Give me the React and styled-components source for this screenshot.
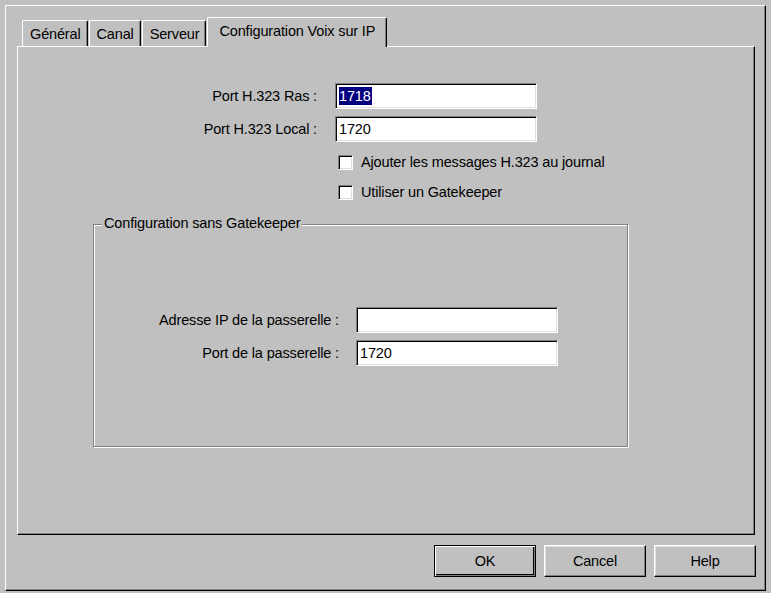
import styled, { createGlobalStyle } from 'styled-components';

// Win9x palette
const FACE = '#c0c0c0';
const LIGHT = '#dfdfdf';
const SHADOW = '#808080';
const DARK = '#000000';

const GlobalStyle = createGlobalStyle`
  html, body {
    margin: 0;
    padding: 0;
    background: ${FACE};
  }
  body {
    font-family: 'Liberation Sans', Arial, sans-serif;
    font-size: 14.5px;
    letter-spacing: -0.15px;
    color: #000;
  }
`;

const Window = styled.div`
  box-sizing: border-box;
  margin: 5px 0 0 5px;
  width: 761px;
  height: 586px;
  background: ${FACE};
  border-top: 1px solid #fff;
  border-left: 1px solid #fff;
  border-right: 1px solid ${DARK};
  border-bottom: 1px solid ${DARK};
  box-shadow: inset -1px -1px 0 ${SHADOW};
  padding: 11px 10px 13px 11px;
  display: flex;
  flex-direction: column;
`;

const TabStrip = styled.div`
  display: flex;
  align-items: flex-end;
  height: 29px;
  padding-left: 5px;
  position: relative;
  z-index: 1;
`;

const Tab = styled.div`
  box-sizing: border-box;
  height: ${(p) => (p.$active ? '30px' : '26px')};
  margin-bottom: ${(p) => (p.$active ? '-1px' : '0')};
  padding: ${(p) => (p.$active ? '0 11px 3px 11px' : '0 6px 0 7px')};
  display: flex;
  align-items: center;
  background: ${FACE};
  border-top: 1px solid #fff;
  border-left: 1px solid #fff;
  border-right: 1px solid ${DARK};
  border-top-left-radius: 2px;
  border-top-right-radius: 2px;
  box-shadow: inset -1px 0 0 ${SHADOW};
  white-space: nowrap;
  margin-right: ${(p) => (p.$active ? '0' : '1px')};
`;

const Panel = styled.div`
  box-sizing: border-box;
  height: 489px;
  border-top: 1px solid #fff;
  border-left: 1px solid #fff;
  border-right: 1px solid ${DARK};
  border-bottom: 1px solid ${DARK};
  box-shadow: inset -1px -1px 0 ${SHADOW};
  padding-top: 36px;
  display: flex;
  flex-direction: column;
`;

const FieldGrid = styled.div`
  display: grid;
  grid-template-columns: ${(p) => p.$labelWidth}px 202px;
  column-gap: ${(p) => p.$gap}px;
  row-gap: 7px;
  align-items: center;
`;

const Label = styled.div`
  text-align: right;
  white-space: nowrap;
`;

const Field = styled.div`
  box-sizing: border-box;
  height: 26px;
  background: #fff;
  border-top: 1px solid ${SHADOW};
  border-left: 1px solid ${SHADOW};
  border-right: 1px solid #fff;
  border-bottom: 1px solid #fff;
  box-shadow: inset 1px 1px 0 ${DARK}, inset -1px -1px 0 ${LIGHT};
  padding: 0 3px;
  display: flex;
  align-items: center;
  white-space: nowrap;
`;

const Selected = styled.span`
  background: #000080;
  color: #fff;
  line-height: 18px;
  padding-right: 1px;
`;

const CheckList = styled.div`
  display: flex;
  flex-direction: column;
  gap: 14px;
  margin: 12px 0 0 320px;
`;

const CheckRow = styled.label`
  display: flex;
  align-items: center;
  gap: 8px;
  height: 16px;
  white-space: nowrap;
`;

const Box = styled.span`
  box-sizing: border-box;
  width: 15px;
  height: 15px;
  background: #fff;
  border-top: 1px solid ${SHADOW};
  border-left: 1px solid ${SHADOW};
  border-right: 1px solid #fff;
  border-bottom: 1px solid #fff;
  box-shadow: inset 1px 1px 0 ${DARK}, inset -1px -1px 0 ${LIGHT};
`;

const GroupBox = styled.div`
  position: relative;
  box-sizing: border-box;
  margin: 24px 0 0 75px;
  width: 535px;
  height: 223px;
  border: 1px solid ${SHADOW};
  box-shadow: inset 1px 1px 0 #fff, 1px 1px 0 #fff;
  padding-top: 82px;
`;

const Legend = styled.span`
  position: absolute;
  top: -10px;
  left: 8px;
  padding: 0 2px;
  background: ${FACE};
  line-height: 17px;
`;

const ButtonRow = styled.div`
  display: flex;
  justify-content: flex-end;
  gap: 8px;
  margin: 10px -1px 0 0;
`;

const Button = styled.button`
  box-sizing: border-box;
  width: 102px;
  height: 32px;
  font: inherit;
  letter-spacing: inherit;
  color: #000;
  background: ${FACE};
  border-top: 1px solid ${(p) => (p.$default ? DARK : '#fff')};
  border-left: 1px solid ${(p) => (p.$default ? DARK : '#fff')};
  border-right: 1px solid ${DARK};
  border-bottom: 1px solid ${DARK};
  box-shadow: ${(p) =>
    p.$default
      ? `inset 1px 1px 0 #fff, inset -1px -1px 0 ${SHADOW}, inset -2px -2px 0 ${DARK}`
      : `inset -1px -1px 0 ${SHADOW}, inset 1px 1px 0 ${LIGHT}`};
  padding: 0;
`;

const tabs = ['Général', 'Canal', 'Serveur', 'Configuration Voix sur IP'];

export default function App() {
  return (
    <>
      <GlobalStyle />
      <Window>
        <TabStrip>
          {tabs.map((t, i) => (
            <Tab key={t} $active={i === tabs.length - 1}>
              {t}
            </Tab>
          ))}
        </TabStrip>
        <Panel>
          <FieldGrid $labelWidth={299} $gap={18}>
            <Label>Port H.323 Ras :</Label>
            <Field>
              <Selected>1718</Selected>
            </Field>
            <Label>Port H.323 Local :</Label>
            <Field>1720</Field>
          </FieldGrid>

          <CheckList>
            <CheckRow>
              <Box />
              Ajouter les messages H.323 au journal
            </CheckRow>
            <CheckRow>
              <Box />
              Utiliser un Gatekeeper
            </CheckRow>
          </CheckList>

          <GroupBox>
            <Legend>Configuration sans Gatekeeper</Legend>
            <FieldGrid $labelWidth={245} $gap={17}>
              <Label>Adresse IP de la passerelle :</Label>
              <Field />
              <Label>Port de la passerelle :</Label>
              <Field>1720</Field>
            </FieldGrid>
          </GroupBox>
        </Panel>
        <ButtonRow>
          <Button $default>OK</Button>
          <Button>Cancel</Button>
          <Button>Help</Button>
        </ButtonRow>
      </Window>
    </>
  );
}
